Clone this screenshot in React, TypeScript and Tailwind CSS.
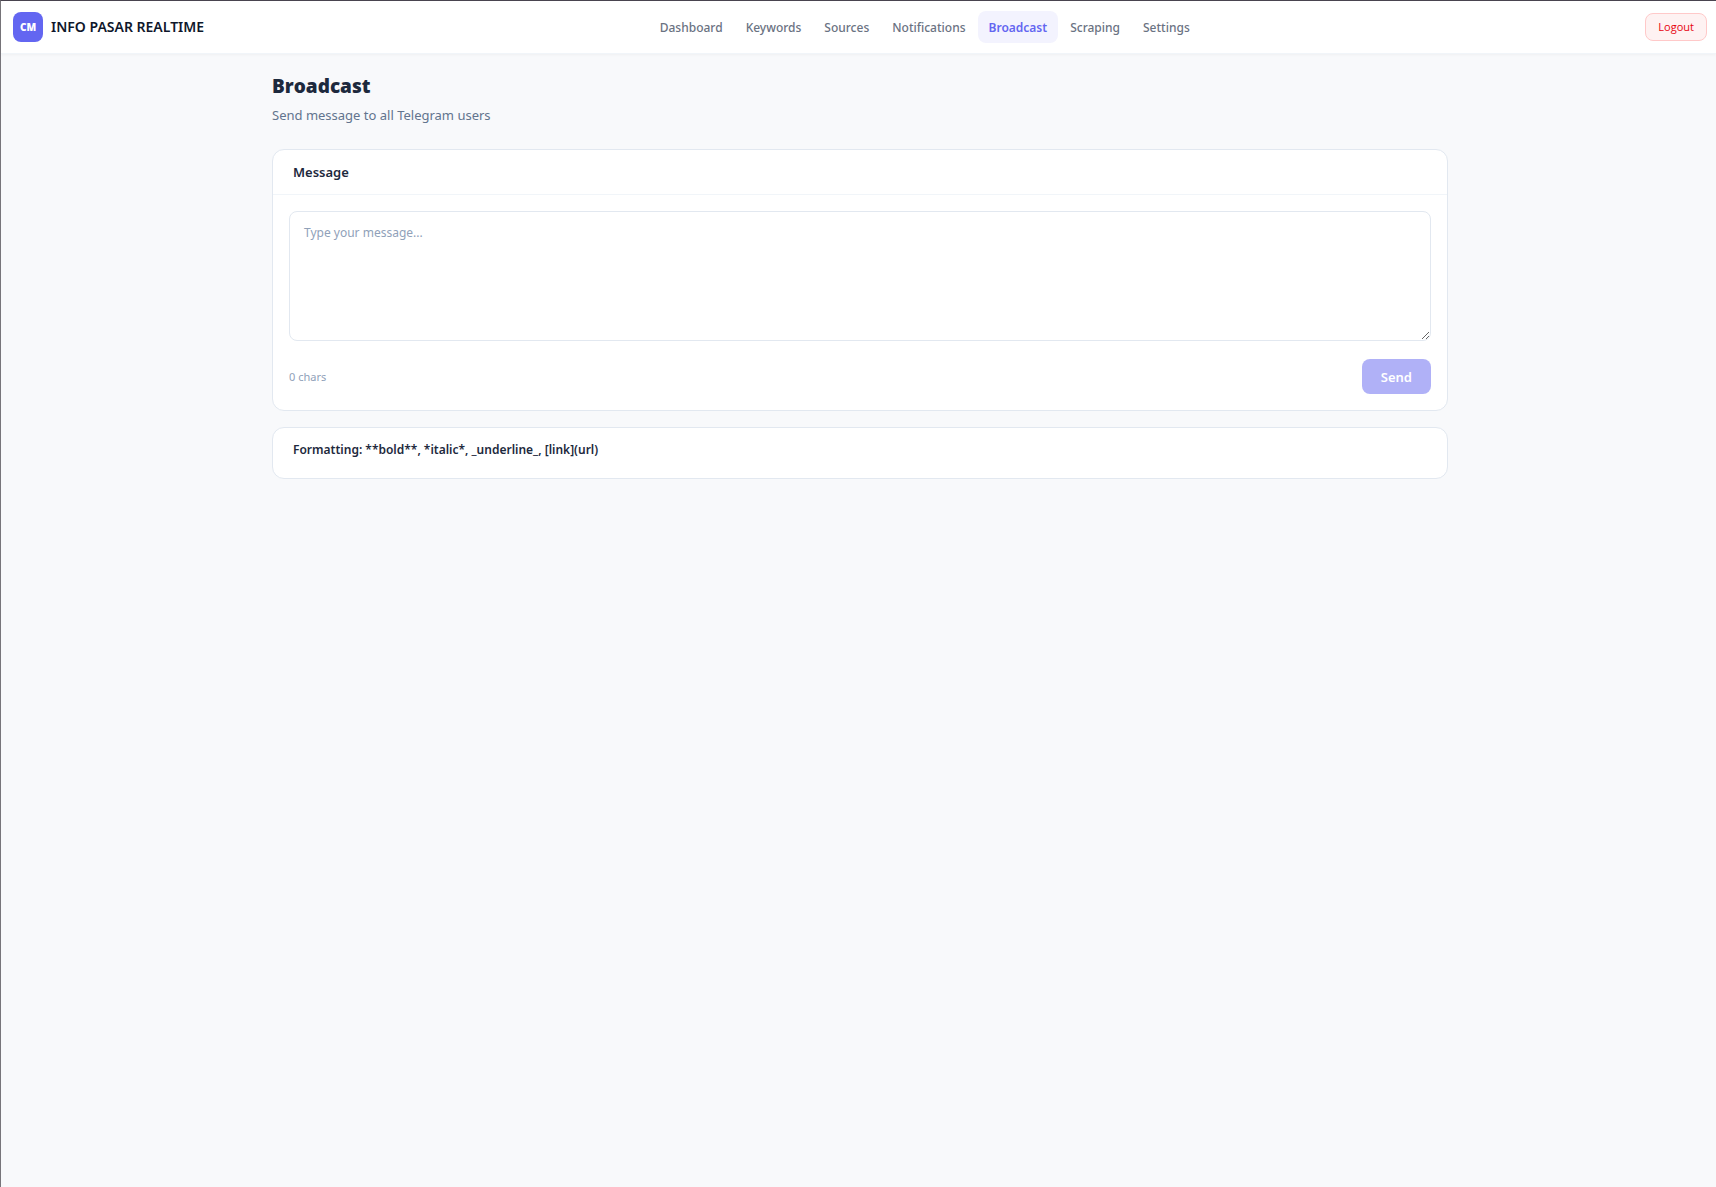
import React, { useState } from 'react';

const NAV_ITEMS = [
    'Dashboard',
    'Keywords',
    'Sources',
    'Notifications',
    'Broadcast',
    'Scraping',
    'Settings',
];

const Header: React.FC = () => (
    <header className="flex h-[53px] items-center justify-between border-b border-slate-100 bg-white pr-[9px] pl-3 shadow-[0_1px_3px_rgba(0,0,0,0.04)]">
        <a href="#dashboard" className="flex items-center gap-2">
            <span className="flex size-[30px] items-center justify-center rounded-lg bg-[#6366f1] font-['Open_Sans',sans-serif] text-[10px] font-extrabold text-white">
                CM
            </span>
            <span className="text-[14px] leading-5 font-semibold text-slate-900">INFO PASAR REALTIME</span>
        </a>

        <nav className="flex items-center gap-px">
            {NAV_ITEMS.map((item) => (
                <a
                    key={item}
                    href={`#${item.toLowerCase()}`}
                    className={`rounded-lg px-[11px] pt-[7px] pb-[5px] text-[12px] leading-5 ${
                        item === 'Broadcast'
                            ? 'bg-[#f3f3fe] font-semibold text-[#6366f1]'
                            : 'font-medium text-gray-500'
                    }`}
                >
                    {item}
                </a>
            ))}
        </nav>

        <button
            type="button"
            className="h-7 rounded-lg border border-red-200 bg-red-50 px-3 font-['Open_Sans',sans-serif] text-[11px] leading-4 font-medium text-red-600"
        >
            Logout
        </button>
    </header>
);

const App: React.FC = () => {
    const [message, setMessage] = useState('');

    return (
        <div className="min-h-screen border-t border-l border-t-[#4a4550] border-l-[#77757a] bg-[#f8f9fb] font-['Noto_Sans',sans-serif]">
            <Header />

            <main className="pt-5 pr-3 pl-[15px]">
                <div className="mx-auto max-w-[1176px]">
                    <h1 className="font-['Open_Sans',sans-serif] text-[19px] leading-6 font-extrabold text-slate-800">
                        Broadcast
                    </h1>
                    <p className="mt-[7px] text-[13px] leading-5 text-slate-500">Send message to all Telegram users</p>

                    <section className="mt-6 rounded-xl border border-slate-200 bg-white">
                        <div className="border-b border-slate-100 px-5 py-3">
                            <h2 className="text-[13px] leading-5 font-semibold text-slate-800">
                                <label htmlFor="message">Message</label>
                            </h2>
                        </div>
                        <div className="p-4">
                            <textarea
                                id="message"
                                value={message}
                                onChange={(e) => setMessage(e.target.value)}
                                placeholder="Type your message..."
                                className="block h-[130px] w-full resize-y rounded-lg border border-slate-200 px-3.5 py-[11px] text-[12px] leading-5 text-slate-800 placeholder:text-slate-400"
                            />
                            <div className="mt-[18px] flex items-center justify-between">
                                <span className="text-[11px] leading-4 text-slate-400">{message.length} chars</span>
                                <button
                                    type="button"
                                    disabled={!message}
                                    className="h-[35px] rounded-lg bg-[#6366f1] px-[19px] text-[13px] leading-5 font-semibold text-white disabled:opacity-50"
                                >
                                    Send
                                </button>
                            </div>
                        </div>
                    </section>

                    <section className="mt-4 rounded-xl border border-slate-200 bg-white px-5 pt-3 pb-[18px]">
                        <p className="text-[12px] leading-5 font-semibold text-slate-800">
                            Formatting: **bold**, *italic*, _underline_, [link](url)
                        </p>
                    </section>
                </div>
            </main>
        </div>
    );
};

export default App;
